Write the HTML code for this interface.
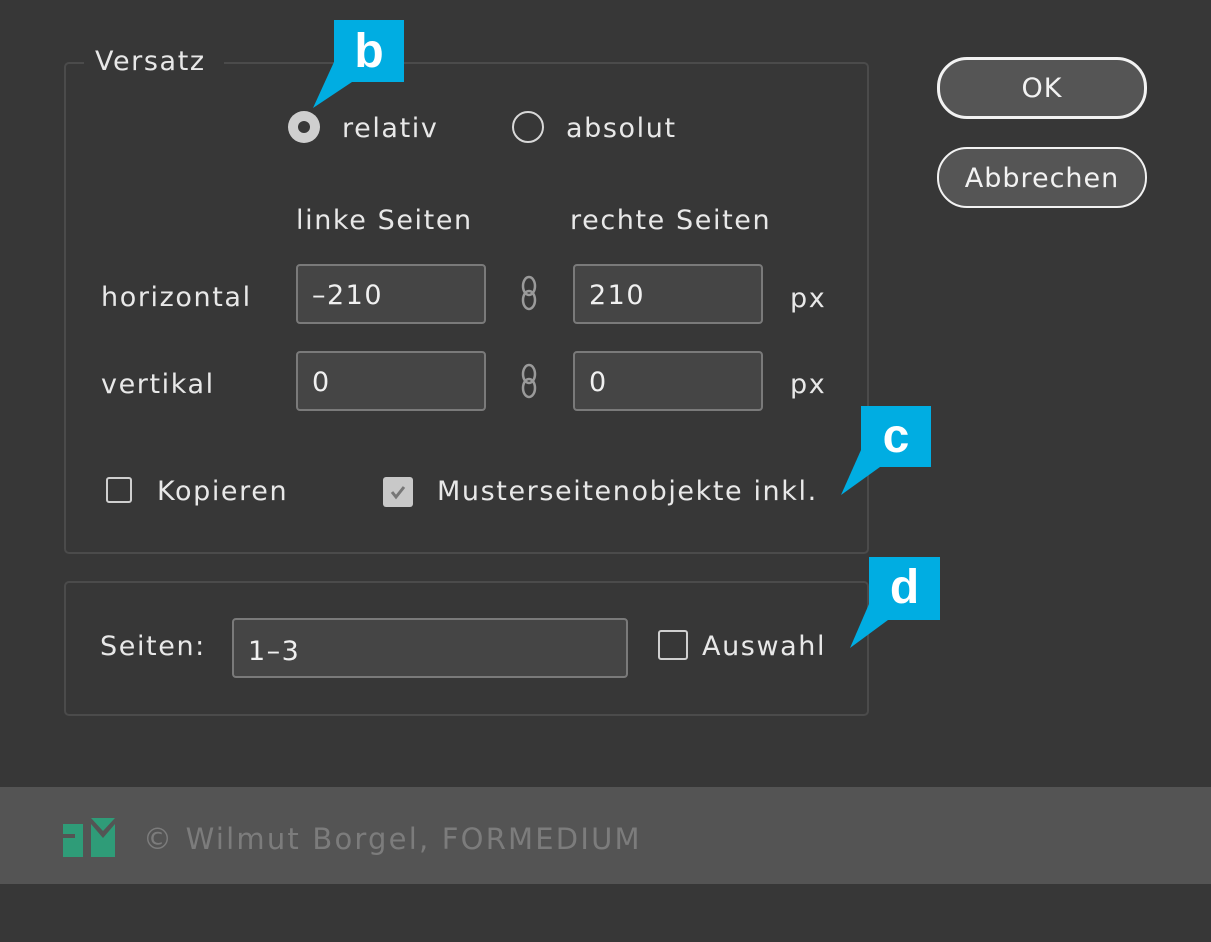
<!DOCTYPE html>
<html><head><style>
body{margin:0;width:1211px;height:942px;background:#373737;position:relative;overflow:hidden;font-family:"DejaVu Sans","Liberation Sans",sans-serif;color:#e6e6e6}
.a{position:absolute}
.panel{position:absolute;border:2px solid #4b4b4b;border-radius:5px}
.inp{position:absolute;background:#454545;border:2px solid #7a7a7a;border-radius:4px;box-sizing:border-box;font-size:27px;letter-spacing:1.5px;padding-left:14px;line-height:60px;color:#f0f0f0}
.t{position:absolute;font-size:27px;letter-spacing:1.6px;white-space:nowrap;color:#e8e8e8}
.btn{position:absolute;border:3px solid #f2f2f2;border-radius:30px;background:#555;box-sizing:border-box;text-align:center;color:#f2f2f2;font-size:27px;letter-spacing:1px}
.cb{position:absolute;width:26px;height:26px;border:2px solid #cfcfcf;border-radius:3px;box-sizing:border-box}
.call{position:absolute;background:#00ade2;color:#fff;font-weight:bold;font-size:48px;text-align:center;font-family:"Liberation Sans",sans-serif}
</style></head><body>
<div class="panel" style="left:64px;top:62px;width:801px;height:488px"></div>
<div class="a" style="left:84px;top:50px;width:140px;height:24px;background:#373737"></div>
<div class="t" style="left:95px;top:46px">Versatz</div>

<div class="a" style="left:288px;top:111px;width:32px;height:32px;border-radius:50%;background:#cfcfcf"></div>
<div class="a" style="left:298px;top:121px;width:12px;height:12px;border-radius:50%;background:#383838"></div>
<div class="t" style="left:342px;top:113px">relativ</div>
<div class="a" style="left:512px;top:111px;width:32px;height:32px;border-radius:50%;border:2px solid #d8d8d8;box-sizing:border-box"></div>
<div class="t" style="left:566px;top:113px">absolut</div>

<div class="t" style="left:296px;top:205px">linke Seiten</div>
<div class="t" style="left:570px;top:205px">rechte Seiten</div>

<div class="t" style="left:101px;top:282px">horizontal</div>
<div class="inp" style="left:296px;top:264px;width:190px;height:60px">–210</div>
<div class="inp" style="left:573px;top:264px;width:190px;height:60px">210</div>
<div class="t" style="left:790px;top:283px">px</div>
<div class="t" style="left:101px;top:369px">vertikal</div>
<div class="inp" style="left:296px;top:351px;width:190px;height:60px">0</div>
<div class="inp" style="left:573px;top:351px;width:190px;height:60px">0</div>
<div class="t" style="left:790px;top:369px">px</div>

<svg class="a" style="left:518px;top:274px" width="22" height="40"><g fill="none" stroke="#9a9a9a" stroke-width="2.5"><ellipse cx="11" cy="12" rx="6" ry="9"/><ellipse cx="11" cy="26" rx="6" ry="9"/></g></svg>
<svg class="a" style="left:518px;top:362px" width="22" height="40"><g fill="none" stroke="#9a9a9a" stroke-width="2.5"><ellipse cx="11" cy="12" rx="6" ry="9"/><ellipse cx="11" cy="26" rx="6" ry="9"/></g></svg>

<div class="cb" style="left:106px;top:477px"></div>
<div class="t" style="left:157px;top:476px">Kopieren</div>
<div class="a" style="left:383px;top:477px;width:30px;height:30px;background:#c8c8c8;border-radius:3px"></div>
<svg class="a" style="left:383px;top:477px" width="30" height="30"><path d="M9 15 L13 20 L21 10" fill="none" stroke="#777" stroke-width="3"/></svg>
<div class="t" style="left:437px;top:476px">Musterseitenobjekte inkl.</div>

<div class="panel" style="left:64px;top:581px;width:801px;height:131px"></div>
<div class="t" style="left:100px;top:631px">Seiten:</div>
<div class="inp" style="left:232px;top:618px;width:396px;height:60px;line-height:64px">1–3</div>
<div class="cb" style="left:658px;top:630px;width:30px;height:30px"></div>
<div class="t" style="left:702px;top:631px">Auswahl</div>

<div class="btn" style="left:937px;top:57px;width:210px;height:62px;line-height:58px">OK</div>
<div class="btn" style="left:937px;top:147px;width:210px;height:61px;line-height:59px;border-width:2px">Abbrechen</div>

<svg class="a" style="left:0;top:0" width="1211" height="942">
<polygon points="334,62 352,82 313,108" fill="#00ade2"/>
<polygon points="861,450 880,467 841,495" fill="#00ade2"/>
<polygon points="869,604 888,620 850,648" fill="#00ade2"/>
</svg>
<div class="call" style="left:334px;top:20px;width:70px;height:62px;line-height:64px">b</div>
<div class="call" style="left:861px;top:406px;width:70px;height:61px;line-height:62px">c</div>
<div class="call" style="left:869px;top:557px;width:71px;height:63px;line-height:62px">d</div>

<div class="a" style="left:0;top:787px;width:1211px;height:97px;background:#545454"></div>
<svg class="a" style="left:63px;top:818px" width="54" height="40">
<rect x="0" y="6" width="20" height="33" fill="#2f9c78"/><rect x="0" y="16" width="12" height="4" fill="#545454"/>
<polygon points="28,0 52,0 40,13" fill="#2f9c78"/>
<polygon points="28,6 40,20 52,6 52,39 28,39" fill="#2f9c78"/>
</svg>
<div class="t" style="left:143px;top:822px;color:#7c7c7c;font-size:29px;letter-spacing:2.2px">© Wilmut Borgel, FORMEDIUM</div>
</body></html>
